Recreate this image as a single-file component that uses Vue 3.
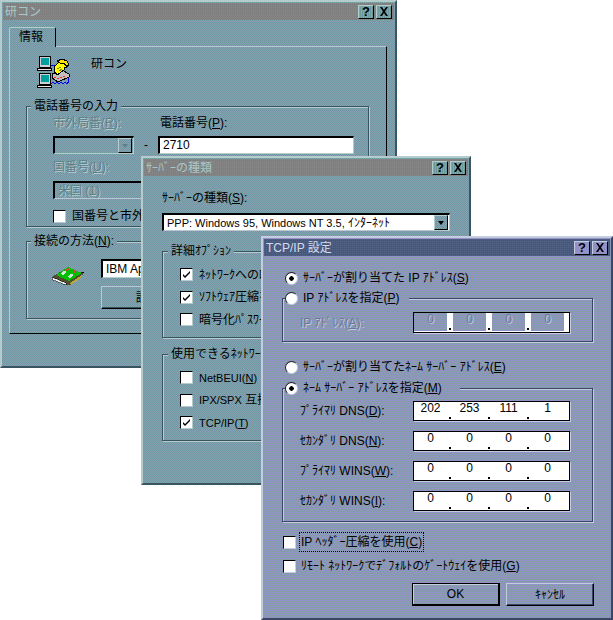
<template>
  <div class="desktop">

    <!-- 研コン -->
    <div class="win win-main">
      <div class="title">
        <span>研コン</span>
        <div class="title-btns">
          <span class="tbtn">?</span>
          <span class="tbtn"><svg width="10" height="9" viewBox="0 0 10 9"><path d="M1 0h2l2 3 2-3h2L6 4.500 9 9H7L5 6 3 9H1l3-4.500z" fill="#000"/></svg></span>
        </div>
      </div>
      <div class="main-body">
        <div class="tab">情報</div>
        <div class="panel">
          <div class="conn-head">
            <svg class="conn-icon" width="34" height="33" viewBox="0 0 34 33" shape-rendering="crispEdges">
              <path d="M14 9.500h4M14 27.500l2-1 2 1 2-1 2 1 2-1 2 1 2-1 2 1 1-1v-6" fill="none" stroke="#0000ff"/>
              <rect x="2.500" y="0.500" width="11" height="11" fill="#d0d0d0" stroke="#000"/>
              <rect x="4" y="2" width="8" height="7" fill="#00a0a0"/>
              <rect x="0.500" y="12.500" width="14" height="2" fill="#e8e8e8" stroke="#000"/>
              <rect x="2.500" y="17.500" width="11" height="11" fill="#d0d0d0" stroke="#000"/>
              <rect x="4" y="19" width="8" height="7" fill="#00a0a0"/>
              <rect x="0.500" y="29.500" width="14" height="2" fill="#e8e8e8" stroke="#000"/>
              <path d="M15 18l10-4 7 4v3l-11 5-6-4z" fill="#c0c0c0" stroke="#000"/>
              <path d="M17 21h2M20 22h2M23 21h2M26 20h2" stroke="#ff2020"/>
              <path d="M17 11l6-6 5 1 3 3-2 3-2-1v3l-7 5-3-4z" fill="#ffff00" stroke="#000"/>
              <path d="M20 5l5-2 5 2 2 4-3 1-2-3-4 0z" fill="#ffe000" stroke="#000"/>
              <path d="M20 13l4-2M22 15l3-2" stroke="#808000"/>
            </svg>
            <span>研コン</span>
          </div>

          <div class="group phone-group">
            <div class="legend">電話番号の入力</div>
            <div class="phone-grid">
              <span class="disabled">市外局番(<u>R</u>):</span>
              <span></span>
              <span class="phone-label">電話番号(<u>P</u>):</span>
              <div class="combo combo-off"><span class="arrow-btn"><i class="arrow off"></i></span></div>
              <span class="dash">-</span>
              <div class="field phone-no">2710</div>
            </div>
            <div class="disabled country-label">国番号(<u>U</u>):</div>
            <div class="combo combo-off country"><span class="disabled">米国 (1)</span></div>
            <div class="check-row use-code"><span class="check"></span><span>国番号と市外局番を使う</span></div>
          </div>

          <div class="group method-group">
            <div class="legend">接続の方法(<u>N</u>):</div>
            <div class="method-row">
              <svg class="modem" width="32" height="20" viewBox="0 0 32 20" shape-rendering="crispEdges">
                <path d="M0 11L13 3h6l13 5-14 11h-4z" fill="#505030"/>
                <path d="M0 11l14 6v2L1 14z" fill="#f0f0f0" stroke="#000" stroke-width=".5"/>
                <path d="M4 9L16 1l14 6-13 8z" fill="#00c000"/>
                <path d="M8 8l4-3 3 1-4 3zM15 11l4-3 3 1-4 3z" fill="#d8e8d8"/>
                <path d="M13 4l3-2 2 1-3 2zM20 6l3-2 2 1-3 2z" fill="#e04040"/>
                <path d="M18 17l12-8v2l-11 8z" fill="#b8a840"/>
                <path d="M29 6h3v1h-3z" fill="#000"/>
              </svg>
              <div class="method-ctrl">
                <div class="combo method-select">IBM Aptiva Modem</div>
                <div class="btn method-btn">設定(<u>C</u>)...</div>
              </div>
            </div>
          </div>
        </div>
      </div>
    </div>

    <!-- サーバーの種類 -->
    <div class="win win-server">
      <div class="title">
        <span>ｻｰﾊﾞｰの種類</span>
        <div class="title-btns">
          <span class="tbtn">?</span>
          <span class="tbtn"><svg width="10" height="9" viewBox="0 0 10 9"><path d="M1 0h2l2 3 2-3h2L6 4.500 9 9H7L5 6 3 9H1l3-4.500z" fill="#000"/></svg></span>
        </div>
      </div>
      <div class="server-body">
        <div class="row-label">ｻｰﾊﾞｰの種類(<u>S</u>):</div>
        <div class="combo server-combo">
          <span><span class="small-latin">PPP: Windows 95, Windows NT 3.5,</span> ｲﾝﾀｰﾈｯﾄ</span>
          <span class="arrow-btn"><i class="arrow"></i></span>
        </div>

        <div class="group server-group detail">
          <div class="legend">詳細ｵﾌﾟｼｮﾝ</div>
          <div v-for="o in detailOptions" :key="o.text" class="check-row">
            <span class="check"><svg v-if="o.on" width="9" height="9" viewBox="0 0 9 9"><path d="M1 4l2 2 5-5v2L3 8 1 6z" fill="#000"/></svg></span>
            <span>{{ o.text }}</span>
          </div>
        </div>

        <div class="group server-group protocols">
          <div class="legend">使用できるﾈｯﾄﾜｰｸ ﾌﾟﾛﾄｺﾙ</div>
          <div class="check-row"><span class="check"></span><span class="small-latin">NetBEUI(<u>N</u>)</span></div>
          <div class="check-row"><span class="check"></span><span><span class="small-latin">IPX/SPX</span> 互換(<u>I</u>)</span></div>
          <div class="check-row">
            <span class="check"><svg width="9" height="9" viewBox="0 0 9 9"><path d="M1 4l2 2 5-5v2L3 8 1 6z" fill="#000"/></svg></span>
            <span class="small-latin">TCP/IP(<u>T</u>)</span>
          </div>
        </div>
      </div>
    </div>

    <!-- TCP/IP 設定 -->
    <div class="win win-tcp">
      <div class="title">
        <span>TCP/IP 設定</span>
        <div class="title-btns">
          <span class="tbtn">?</span>
          <span class="tbtn"><svg width="10" height="9" viewBox="0 0 10 9"><path d="M1 0h2l2 3 2-3h2L6 4.500 9 9H7L5 6 3 9H1l3-4.500z" fill="#000"/></svg></span>
        </div>
      </div>
      <div class="tcp-body">
        <div class="radio-row first"><span class="radio on"></span><span>ｻｰﾊﾞｰが割り当てた IP ｱﾄﾞﾚｽ(<u>S</u>)</span></div>

        <div class="group ip-group">
          <div class="legend radio-row"><span class="radio"></span><span>IP ｱﾄﾞﾚｽを指定(<u>P</u>)</span></div>
          <div class="ip-line off-line">
            <span class="disabled">IP ｱﾄﾞﾚｽ(<u>A</u>):</span>
            <div class="ip-field off">
              <template v-for="(n, i) in [0, 0, 0, 0]" :key="i">
                <span class="seg disabled">{{ n }}</span>
                <span v-if="i < 3" class="dot"></span>
              </template>
            </div>
          </div>
        </div>

        <div class="radio-row third"><span class="radio"></span><span>ｻｰﾊﾞｰが割り当てたﾈｰﾑ ｻｰﾊﾞｰ ｱﾄﾞﾚｽ(<u>E</u>)</span></div>

        <div class="group dns-group">
          <div class="legend radio-row"><span class="radio on"></span><span>ﾈｰﾑ ｻｰﾊﾞｰ ｱﾄﾞﾚｽを指定(<u>M</u>)</span></div>
          <div v-for="row in dnsRows" :key="row.label" class="ip-line">
            <span>{{ row.label }}(<u>{{ row.key }}</u>):</span>
            <div class="ip-field">
              <template v-for="(n, i) in row.parts" :key="i">
                <span class="seg">{{ n }}</span>
                <span v-if="i < 3" class="dot"></span>
              </template>
            </div>
          </div>
        </div>

        <div class="check-row tcp-check one"><span class="check"></span><span class="focus">IP ﾍｯﾀﾞｰ圧縮を使用(<u>C</u>)</span></div>
        <div class="check-row tcp-check two"><span class="check"></span><span>ﾘﾓｰﾄ ﾈｯﾄﾜｰｸでﾃﾞﾌｫﾙﾄのｹﾞｰﾄｳｪｲを使用(<u>G</u>)</span></div>

        <div class="actions">
          <div class="btn default">OK</div>
          <div class="btn">ｷｬﾝｾﾙ</div>
        </div>
      </div>
    </div>

  </div>
</template>

<script setup>
const detailOptions = [
  { text: "ﾈｯﾄﾜｰｸへのﾛｸﾞｵﾝ", on: true },
  { text: "ｿﾌﾄｳｪｱ圧縮をする", on: true },
  { text: "暗号化ﾊﾟｽﾜｰﾄﾞを要求する", on: false }
]

const dnsRows = [
  { label: "ﾌﾟﾗｲﾏﾘ DNS", key: "D", parts: [202, 253, 111, 1] },
  { label: "ｾｶﾝﾀﾞﾘ DNS", key: "N", parts: [0, 0, 0, 0] },
  { label: "ﾌﾟﾗｲﾏﾘ WINS", key: "W", parts: [0, 0, 0, 0] },
  { label: "ｾｶﾝﾀﾞﾘ WINS", key: "I", parts: [0, 0, 0, 0] }
]
</script>

<style>
html, body {
  margin: 0;
  background: #fff;
}
</style>

<style scoped>
.desktop {
  position: relative;
  width: 613px;
  height: 620px;
  overflow: hidden;
  background: #fff;
  font-family: "Liberation Sans", "Noto Sans CJK JP", sans-serif;
  font-size: 12px;
  line-height: 16px;
  color: #000;
}

.win {
  position: absolute;
  box-sizing: border-box;
  border: 2px solid;
  border-color: var(--light) var(--dark) var(--dark) var(--light);
  background: var(--dither) 1px 0 fixed;
}

.win-main,
.win-server {
  --dither: url("data:image/svg+xml,%3Csvg xmlns='http://www.w3.org/2000/svg' width='2' height='2'%3E%3Crect width='2' height='2' fill='%236b9a9e'/%3E%3Crect width='1' height='1' fill='%238ba0b6'/%3E%3Crect x='1' y='1' width='1' height='1' fill='%238ba0b6'/%3E%3C/svg%3E");
  --title-bg: url("data:image/svg+xml,%3Csvg xmlns='http://www.w3.org/2000/svg' width='2' height='2'%3E%3Crect width='2' height='2' fill='%23808080'/%3E%3Crect width='1' height='1' fill='%23888888'/%3E%3C/svg%3E");
  --light: #b4cccc;
  --dark: #3b5560;
  --off: #5f7f8a;
  --off-hi: #b4cccc;
}

.win-tcp {
  --dither: url("data:image/svg+xml,%3Csvg xmlns='http://www.w3.org/2000/svg' width='2' height='2'%3E%3Crect width='2' height='2' fill='%239090c6'/%3E%3Crect width='1' height='1' fill='%2386a0a8'/%3E%3Crect x='1' y='1' width='1' height='1' fill='%2386a0a8'/%3E%3C/svg%3E");
  --title-bg: url("data:image/svg+xml,%3Csvg xmlns='http://www.w3.org/2000/svg' width='2' height='2'%3E%3Crect width='2' height='2' fill='%2346587c'/%3E%3Crect width='1' height='1' fill='%23566488'/%3E%3C/svg%3E");
  --light: #c4cce0;
  --dark: #3c4468;
  --off: #6a7898;
  --off-hi: #c4cce0;
}

.win-main { left: 0; top: 0; width: 397px; height: 368px; }
.win-server { left: 141px; top: 156px; width: 330px; height: 329px; }
.win-tcp { left: 261px; top: 236px; width: 352px; height: 384px; }

.title {
  display: flex;
  justify-content: space-between;
  align-items: center;
  height: 17px;
  margin: 1px 1px 0;
  padding: 0 2px;
  background: var(--title-bg);
  color: #a8c8c8;
}

.win-tcp .title {
  color: #d4dcec;
}

.title-btns {
  display: flex;
  gap: 2px;
}

.tbtn {
  display: flex;
  align-items: center;
  justify-content: center;
  box-sizing: border-box;
  width: 16px;
  height: 14px;
  border: 1px solid;
  border-color: var(--light) #000 #000 var(--light);
  background: var(--dither) 1px 0 fixed;
  color: #000;
  font-weight: 700;
  font-size: 13px;
}

/* group boxes */
.group {
  box-sizing: border-box;
  border: 1px solid var(--dark);
  box-shadow: 1px 1px 0 var(--light), inset 1px 1px 0 var(--light);
}

.legend {
  width: fit-content;
  height: 16px;
  margin: -9px 0 0 4px;
  padding: 0 3px;
  background: var(--dither) 1px 0 fixed;
}

.disabled {
  color: var(--off);
  text-shadow: 1px 1px 0 var(--off-hi);
}

.small-latin {
  font-size: 11px;
}

/* controls */
.check-row,
.radio-row {
  display: flex;
  align-items: center;
  height: 16px;
  white-space: nowrap;
}

.check {
  display: flex;
  align-items: center;
  justify-content: center;
  flex: none;
  box-sizing: border-box;
  width: 13px;
  height: 13px;
  margin-right: 6px;
  background: #fff;
  border: 1px solid;
  border-color: #000 var(--light) var(--light) #000;
}

.radio {
  flex: none;
  box-sizing: border-box;
  width: 13px;
  height: 13px;
  margin-right: 5px;
  border-radius: 50%;
  background: #fff;
  border: 1px solid;
  border-color: #222 var(--light) var(--light) #222;
}

.radio.on {
  background: radial-gradient(circle, #000 0 2px, #fff 2.5px);
}

.combo {
  display: flex;
  align-items: center;
  justify-content: space-between;
  box-sizing: border-box;
  height: 18px;
  padding: 0 1px 0 3px;
  background: #fff;
  border: 1px solid;
  border-top: 2px solid #000;
  border-left: 2px solid #000;
  border-color: #000 var(--light) var(--light) #000;
  white-space: nowrap;
  overflow: hidden;
}

.combo-off {
  background: transparent;
}

.arrow-btn {
  display: flex;
  align-items: center;
  justify-content: center;
  flex: none;
  box-sizing: border-box;
  width: 14px;
  height: 15px;
  margin-left: auto;
  border: 1px solid;
  border-color: var(--light) #000 #000 var(--light);
  background: var(--dither) 1px 0 fixed;
}

.arrow {
  width: 0;
  height: 0;
  border: 3px solid transparent;
  border-top: 4px solid #000;
  border-bottom: 0;
}

.arrow.off {
  border-top-color: var(--off);
}

.btn {
  display: flex;
  align-items: center;
  justify-content: center;
  box-sizing: border-box;
  border: 1px solid;
  border-color: var(--light) #000 #000 var(--light);
  box-shadow: inset -1px -1px 0 var(--dark);
}

/* 研コン */
.main-body {
  padding: 7px 0 0 7px;
}

.tab {
  position: relative;
  z-index: 1;
  box-sizing: border-box;
  width: 47px;
  height: 20px;
  margin-bottom: -1px;
  padding-left: 9px;
  line-height: 18px;
  border: 1px solid;
  border-bottom: 0;
  border-radius: 2px 2px 0 0;
  border-color: var(--light) #000 transparent var(--light);
  background: var(--dither) 1px 0 fixed;
}

.panel {
  box-sizing: border-box;
  width: 378px;
  height: 288px;
  padding: 0 0 0 16px;
  border: 1px solid;
  border-color: var(--light) #000 #000 var(--light);
}

.conn-head {
  display: flex;
  align-items: flex-start;
  padding: 9px 0 0 11px;
  height: 49px;
  box-sizing: border-box;
}

.conn-icon {
  flex: none;
  margin-right: 20px;
}

.phone-group {
  width: 343px;
  height: 121px;
  margin-top: 10px;
}

.phone-grid {
  display: grid;
  grid-template-columns: 81px 24px 196px;
  grid-template-rows: 16px 18px;
  row-gap: 5px;
  margin: 1px 0 0 26px;
}

.phone-label {
  padding-left: 2px;
}

.dash {
  text-align: center;
  line-height: 18px;
}

.field {
  box-sizing: border-box;
  padding: 0 3px;
  line-height: 15px;
  background: #fff;
  border: 1px solid;
  border-top: 2px solid #000;
  border-left: 2px solid #000;
  border-color: #000 var(--light) var(--light) #000;
}

.country-label {
  margin: 5px 0 0 26px;
}

.country {
  width: 180px;
  margin: 6px 0 0 26px;
}

.use-code {
  margin: 9px 0 0 26px;
}

.method-group {
  width: 343px;
  height: 78px;
  margin-top: 14px;
}

.method-row {
  display: flex;
}

.modem {
  flex: none;
  margin: 17px 17px 0 25px;
}

.method-ctrl {
  margin-top: 10px;
}

.method-select {
  width: 220px;
  height: 19px;
}

.method-btn {
  width: 120px;
  height: 23px;
  margin-top: 8px;
}

/* サーバーの種類 */
.server-body {
  padding: 14px 0 0 19px;
}

.server-combo {
  width: 288px;
  margin-top: 7px;
}

.server-group {
  display: flex;
  flex-direction: column;
  gap: 6.500px;
  width: 288px;
  height: 87px;
  padding-left: 17px;
}

.server-group .legend {
  margin: -9px 0 0 -12px;
}

.server-group .legend + .check-row {
  margin-top: 1px;
}

.detail { margin-top: 20px; }
.protocols { margin-top: 16px; }

/* TCP/IP 設定 */
.tcp-body {
  padding: 0 20px 0 19px;
}

.radio-row.first {
  margin: 14px 0 0 3px;
}

.radio-row.third {
  margin: 17px 0 0 3px;
}

.radio-row.legend {
  margin: -9px 0 0 -15px;
  padding: 0 10px 0 0;
  box-sizing: content-box;
}

.ip-group {
  width: 311px;
  margin-top: 12px;
  padding: 0 0 8px 17px;
}

.dns-group {
  display: flex;
  flex-direction: column;
  gap: 10px;
  width: 311px;
  margin-top: 13px;
  padding: 0 0 10px 17px;
}

.dns-group .radio-row.legend {
  margin-bottom: -5px;
  padding-right: 18px;
}

.ip-line {
  display: grid;
  grid-template-columns: 113px 157px;
  align-items: center;
}

.off-line {
  margin-top: 6px;
}

.ip-field {
  display: flex;
  align-items: stretch;
  box-sizing: border-box;
  height: 20px;
  background: #fff;
  border: 1px solid #000;
  box-shadow: 1px 1px 0 var(--light);
}

.ip-field.off {
  height: 21px;
  padding-bottom: 1px;
}

.seg {
  width: 33px;
  text-align: center;
  line-height: 13px;
}

.off .seg {
  background: var(--dither) 1px 0 fixed;
}

.dot {
  position: relative;
  width: 6px;
}

.dot::after {
  content: "";
  position: absolute;
  left: 2px;
  bottom: 1px;
  width: 2px;
  height: 2px;
  background: #000;
}

.tcp-check {
  margin-left: 1px;
  height: 16px;
}

.tcp-check .check {
  margin-right: 5px;
}

.tcp-check.one { margin-top: 12px; }
.tcp-check.two { margin-top: 8px; }

.focus {
  outline: 1px dotted #000;
  outline-offset: 1px;
}

.actions {
  display: flex;
  justify-content: flex-end;
  gap: 6px;
  width: 312px;
  margin-top: 9px;
}

.actions .btn {
  width: 88px;
  height: 23px;
}

.btn.default {
  border: 2px solid #000;
  border-top-width: 1px;
  border-left-width: 1px;
  box-shadow: inset 1px 1px 0 var(--light);
}
</style>
